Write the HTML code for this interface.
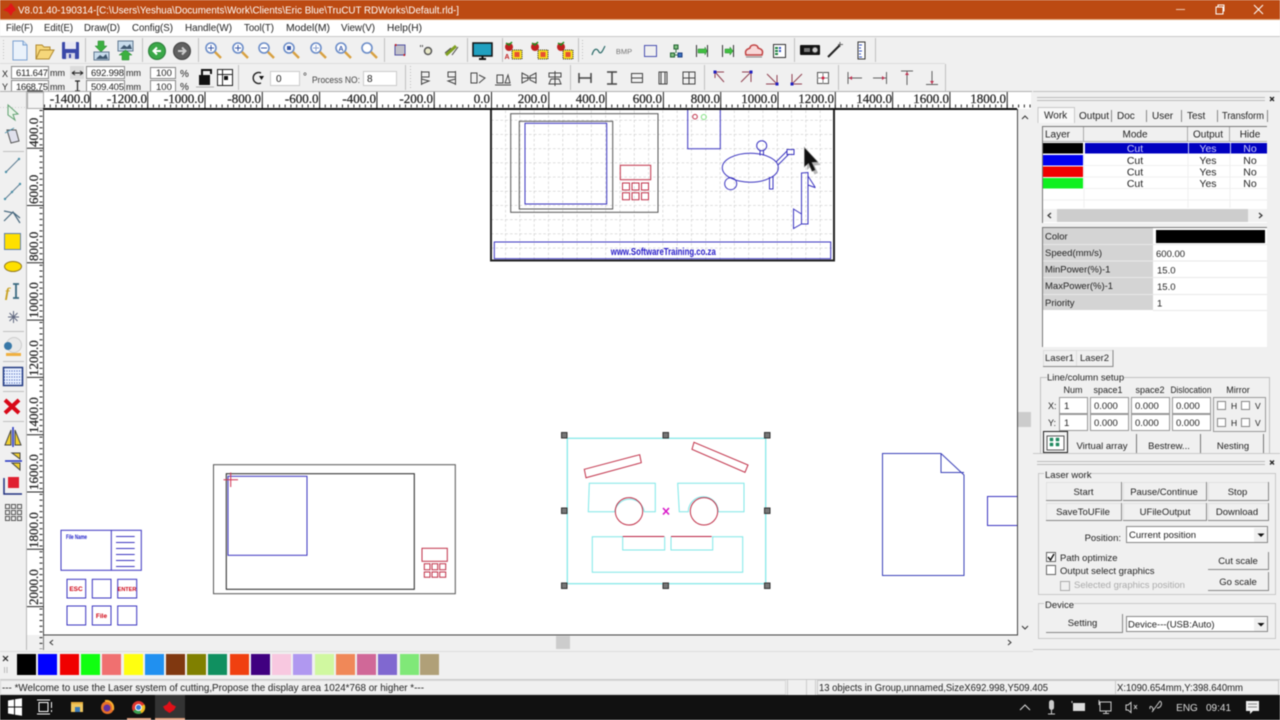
<!DOCTYPE html>
<html><head><meta charset="utf-8"><title>RDWorks</title>
<style>
html,body{margin:0;padding:0;background:#f0f0f0;overflow:hidden}
svg{display:block;position:absolute;left:0;top:0;filter:blur(.4px)}
text{font-family:"Liberation Sans",sans-serif;font-size:10px;fill:#222}
.r{font-family:"Liberation Serif",serif;font-size:13px;fill:#222;stroke:#222;stroke-width:.25}
.m{text-anchor:middle}.e{text-anchor:end}
.b{fill:#f0f0f0;stroke:#a8a8a8}
.bl{fill:none;stroke:#3a34c0}
.rd{fill:none;stroke:#c03048}
.cy{fill:none;stroke:#7fe8e8}
.gy{fill:none;stroke:#555}
.s{stroke:#c0c0c0}
.f{fill:#fff;stroke:#888}
.h{fill:#777;stroke:#333}
.mag{fill:#fff;stroke:#6a8cc8;stroke-width:1.6}
.hd{stroke:#d8a040;stroke-width:2.4}
.ic{fill:none;stroke:#444;stroke-width:1}
</style></head><body>
<svg width="1280" height="720" viewBox="0 0 1280 720" xmlns="http://www.w3.org/2000/svg">
<defs>
<pattern id="grid" x="491" y="120" width="14.3" height="14.2" patternUnits="userSpaceOnUse">
<path d="M0 0V14.2M0 0H14.3" stroke="#bdbdbd" stroke-width="1" stroke-dasharray="2.6 2.1" fill="none"/>
</pattern>
</defs>
<rect width="1280" height="720" fill="#f0f0f0"/>

<!-- title bar -->
<rect width="1280" height="19" fill="#bc4a12"/>
<rect y="19" width="1280" height="1" fill="#e0a070"/>
<path d="M3 10 L8 7 L11 3 L14 7 L16 10 L13 12 L11 16 L8 12Z" fill="#e01818"/>
<text x="18" y="13.5" fill="#fff" style="fill:#fff;font-size:10.5px" textLength="441" lengthAdjust="spacingAndGlyphs">V8.01.40-190314-[C:\Users\Yeshua\Documents\Work\Clients\Eric Blue\TruCUT RDWorks\Default.rld-]</text>
<path d="M1176 9.5H1185" stroke="#f0c8b0" stroke-width="1"/>
<rect x="1216" y="7" width="7" height="7" fill="none" stroke="#fff"/><path d="M1218 7V5H1224V11H1223" fill="none" stroke="#fff"/>
<path d="M1254 5L1263 14M1263 5L1254 14" stroke="#fff" stroke-width="1"/>

<!-- menu -->
<rect y="20" width="1280" height="17" fill="#fff"/>
<rect y="36" width="1280" height="1" fill="#c8c8c8"/>
<g>
<text x="6" y="31" style="font-size:10.5px" textLength="27" lengthAdjust="spacingAndGlyphs">File(F)</text>
<text x="44" y="31" style="font-size:10.5px" textLength="29" lengthAdjust="spacingAndGlyphs">Edit(E)</text>
<text x="84" y="31" style="font-size:10.5px" textLength="36" lengthAdjust="spacingAndGlyphs">Draw(D)</text>
<text x="132" y="31" style="font-size:10.5px" textLength="41" lengthAdjust="spacingAndGlyphs">Config(S)</text>
<text x="185" y="31" style="font-size:10.5px" textLength="47" lengthAdjust="spacingAndGlyphs">Handle(W)</text>
<text x="244" y="31" style="font-size:10.5px" textLength="30" lengthAdjust="spacingAndGlyphs">Tool(T)</text>
<text x="286" y="31" style="font-size:10.5px" textLength="44" lengthAdjust="spacingAndGlyphs">Model(M)</text>
<text x="341" y="31" style="font-size:10.5px" textLength="34" lengthAdjust="spacingAndGlyphs">View(V)</text>
<text x="387" y="31" style="font-size:10.5px" textLength="35" lengthAdjust="spacingAndGlyphs">Help(H)</text>
</g>

<!-- toolbar separators -->
<path d="M85.5 38V62M142.5 38V62M198.5 38V62M384.5 38V62M467.5 38V62M502.5 38V62M578.5 38V62M794.5 38V62M875.5 38V62M238.5 65V90M405.5 65V90M570.5 65V90M704.5 65V90M838.5 65V90M945.5 64V91" class="s"/>
<path d="M0 63.5H945" stroke="#dcdcdc"/>
<path d="M3.5 40V60M582.5 40V60M410.5 66V88" stroke="#bbb" stroke-dasharray="1 2"/>

<!-- toolbar 1 icons -->
<path d="M13 41H23L27 45V60H13Z" fill="#eaf2fb" stroke="#7aa0d0"/><path d="M23 41V45H27" fill="#cfe0f4" stroke="#7aa0d0"/>
<path d="M36 45H42L44 47H50V50H54L49 59H36Z" fill="#f6d77a" stroke="#b08a30"/><path d="M36 59L40 50H54" fill="none" stroke="#b08a30"/>
<rect x="62" y="42" width="17" height="17" rx="1" fill="#3a48a8"/><rect x="65" y="42" width="11" height="7" fill="#e8e8f4"/><rect x="66" y="53" width="9" height="6" fill="#d8d8e8"/><rect x="69" y="54" width="2" height="4" fill="#3a48a8"/>
<path d="M98 41H104V46H107L101 52L95 46H98Z" fill="#3cb040" stroke="#208028" stroke-width=".5"/><rect x="94" y="52" width="15" height="8" fill="#c8dcec" stroke="#607890"/><path d="M96 59L100 55L103 57L106 54L108 59Z" fill="#405870"/>
<rect x="118" y="41" width="15" height="10" fill="#c8dcec" stroke="#607890"/><path d="M120 49L124 45L127 47L130 44L132 49Z" fill="#405870"/><path d="M122 60V55H119L125.500 50L132 55H129V60Z" fill="#3cb040" stroke="#208028" stroke-width=".5"/>
<circle cx="157" cy="51" r="8.500" fill="#3aa848" stroke="#2a7a38"/><path d="M161 51H154M157 47.500L153.500 51L157 54.500" stroke="#fff" stroke-width="2" fill="none"/>
<circle cx="182" cy="51" r="8.500" fill="#606060" stroke="#404040"/><path d="M178 51H185M182 47.500L185.500 51L182 54.500" stroke="#ccc" stroke-width="2" fill="none"/>
<g><circle cx="211" cy="48" r="5" class="mag"/><path d="M215 52L221 58" class="hd"/><path d="M208 48H214M211 45V51" stroke="#3858a8"/></g>
<g><circle cx="238" cy="48" r="5" class="mag"/><path d="M242 52L248 58" class="hd"/><path d="M235 48H241M238 45V51" stroke="#3858a8"/></g>
<g><circle cx="264" cy="48" r="5" class="mag"/><path d="M268 52L274 58" class="hd"/><path d="M261 48H267" stroke="#3858a8"/></g>
<g><circle cx="289" cy="48" r="5" class="mag"/><path d="M293 52L299 58" class="hd"/><rect x="287" y="46" width="4" height="4" fill="#3858a8"/></g>
<g><circle cx="316" cy="48" r="5" class="mag"/><path d="M320 52L326 58" class="hd"/><path d="M313 48H319M316 45V51" stroke="#88a0d0"/></g>
<g><circle cx="341" cy="48" r="5" class="mag"/><path d="M345 52L351 58" class="hd"/><text x="341" y="51" class="m" style="font-size:7px;fill:#3858a8;font-weight:bold">A</text></g>
<g><circle cx="367" cy="48" r="5" class="mag"/><path d="M371 52L377 58" class="hd"/></g>
<rect x="395" y="45" width="10" height="10" fill="#c0c0c8" stroke="#5050a0"/><path d="M395 45h1.500M405 55h-1.500" stroke="#d02020" stroke-width="2"/>
<circle cx="428" cy="51" r="3.500" fill="#e8e8c8" stroke="#555" stroke-width="1.500"/><path d="M420 46h4" stroke="#555" stroke-dasharray="1 1" stroke-width="2"/>
<path d="M446 55L456 46" stroke="#80a020" stroke-width="3"/><path d="M445 53L451 48M452 55L458 47" stroke="#444"/>
<rect x="473" y="43" width="19" height="13" fill="#20a0c0" stroke="#111" stroke-width="1.500"/><path d="M479 59H486M482.500 56V59" stroke="#111" stroke-width="2"/>
<g><circle cx="509" cy="47" r="4" fill="#c02020"/><path d="M506 43l3 2 3-3" stroke="#209020" fill="none" stroke-width="1.500"/><rect x="512" y="50" width="10" height="9" fill="#f8e020" stroke="#222" stroke-dasharray="1 1"/><rect x="514.500" y="52" width="5" height="5" fill="#e85030"/><text x="507" y="59" class="m" style="font-size:7px;fill:#c02020;font-weight:bold">A</text></g>
<g><circle cx="535" cy="47" r="4" fill="#c02020"/><path d="M532 43l3 2 3-3" stroke="#209020" fill="none" stroke-width="1.500"/><rect x="538" y="50" width="10" height="9" fill="#f8e020" stroke="#222" stroke-dasharray="1 1"/><rect x="540.500" y="52" width="5" height="5" fill="#e85030"/></g>
<g><circle cx="561" cy="47" r="4" fill="#c02020"/><path d="M558 43l3 2 3-3" stroke="#209020" fill="none" stroke-width="1.500"/><rect x="563" y="50" width="10" height="9" fill="#f8e020" stroke="#222" stroke-dasharray="1 1"/><rect x="565.500" y="52" width="5" height="5" fill="#e85030"/></g>
<path d="M592 55C594 48 597 48 599 52C601 55 603 50 605 46" fill="none" stroke="#2a6a68" stroke-width="1.200"/>
<text x="624" y="54" class="m" style="font-size:7.500px;fill:#777">BMP</text>
<rect x="644.500" y="45.500" width="12" height="11" fill="none" stroke="#4a50b0"/>
<path d="M676 48V53M672 55H680" stroke="#3a7a48"/><rect x="674" y="45" width="4" height="4" fill="#80c080" stroke="#206030"/><rect x="670.500" y="53" width="4" height="4" fill="#80c080" stroke="#206030"/><rect x="678" y="53" width="4" height="4" fill="#3870c0" stroke="#204080"/>
<path d="M696.500 45V57M707.500 45V57" stroke="#333"/><path d="M698 49H705V47L707 51L705 55V53H698Z" fill="#40c040" stroke="#208028" stroke-width=".5"/>
<path d="M722.500 45V57M733.500 45V57" stroke="#333"/><path d="M725 49H730V47L733 51L730 55V53H725Z" fill="#40c040" stroke="#208028" stroke-width=".5"/>
<path d="M746 55C744 49 749 49 750 48C750 44 758 44 758 48C760 49 764 49 762 55Z" fill="#f8d8d8" stroke="#c04040" stroke-width="1.500"/><path d="M746 57H762" stroke="#888"/>
<rect x="773.500" y="44.500" width="12" height="13" fill="#fff" stroke="#333"/><path d="M775 48h3M775 51h3M775 54h3" stroke="#208040" stroke-width="2"/><path d="M779 48h2M779 51h2" stroke="#3050c0" stroke-width="2"/>
<rect x="800" y="45" width="20" height="10" rx="1" fill="#111"/><circle cx="815" cy="50" r="3" fill="#ccc" stroke="#333"/><rect x="804" y="48" width="6" height="4" fill="#777"/>
<path d="M828 57L840 45" stroke="#222" stroke-width="2"/><path d="M840 42V47M838 44.500H843" stroke="#666"/>
<rect x="858" y="42" width="7" height="17" fill="#fff" stroke="#333"/><path d="M859 45h3M859 48h2M859 51h3M859 54h2M859 57h3" stroke="#3050c0"/>

<!-- toolbar 2 -->
<text x="2" y="77" style="font-size:9px">X</text><text x="2" y="90" style="font-size:9px">Y</text>
<rect x="11.500" y="66.500" width="37" height="12" class="f" stroke="#888"/><text x="16" y="76" style="font-size:9.500px" textLength="32">611.647</text>
<rect x="11.500" y="80.500" width="37" height="11" class="f"/><text x="16" y="90" style="font-size:9.500px" textLength="32">1668.75</text>
<text x="50" y="76" style="font-size:9px">mm</text><text x="50" y="90" style="font-size:9px">mm</text>
<rect x="70" y="66" width="14" height="13" fill="#dcdcdc"/>
<path d="M72 73H83M72 73l3-2M72 73l3 2M83 73l-3-2M83 73l-3 2" stroke="#222" fill="none"/>
<path d="M77.500 81V91M75 81H80M75 91H80" stroke="#222" fill="none" stroke-width="1.200"/>
<rect x="86.500" y="66.500" width="38" height="12" class="f"/><text x="91" y="76" style="font-size:9.500px" textLength="33">692.998</text>
<rect x="86.500" y="80.500" width="38" height="11" class="f"/><text x="91" y="90" style="font-size:9.500px" textLength="33">509.405</text>
<text x="126" y="76" style="font-size:9px">mm</text><text x="126" y="90" style="font-size:9px">mm</text>
<rect x="150.500" y="67.500" width="25" height="11" class="f"/><text x="156" y="76" style="font-size:9.500px">100</text>
<rect x="150.500" y="80.500" width="25" height="11" class="f"/><text x="156" y="90" style="font-size:9.500px">100</text>
<text x="180" y="77" style="font-size:10px">%</text><text x="180" y="90" style="font-size:10px">%</text>
<rect x="199" y="75" width="11" height="10" fill="#111"/><path d="M202 75V70H211V74" fill="none" stroke="#111" stroke-width="2"/><path d="M196 87H214" stroke="#aaa"/>
<rect x="217.500" y="69.500" width="15" height="16" fill="#fff" stroke="#222"/><path d="M217.500 74.500H232.500M222.500 69.500V85.500" stroke="#222"/><rect x="224" y="76" width="4" height="4" fill="#111"/>
<path d="M261 73A5.500 5.500 0 1 0 261 83" fill="none" stroke="#222" stroke-width="1.400"/><path d="M259 76H264L261.500 80Z" fill="#111"/>
<rect x="270.500" y="71.500" width="29" height="14" class="f" style="stroke:#ccc"/><text x="276" y="82">0</text>
<text x="303" y="80" style="font-size:10px">°</text>
<text x="312" y="83" style="font-size:9.500px;fill:#444" textLength="48" lengthAdjust="spacingAndGlyphs">Process NO:</text>
<rect x="363.500" y="71.500" width="33" height="14" class="f" style="stroke:#ccc"/><text x="367" y="82">8</text>

<g class="ic">
<path d="M421.500 71V85M421.500 72H429V77H421.500M421.500 79L429 81L421.500 84" />
<path d="M455.500 71V85M455.500 72H448V77H455.500M455.500 79L448 81L455.500 84"/>
<path d="M471 73H477V83H471ZM479 75L485 78L479 83"/>
<path d="M497 83V75H503V83ZM505 83L508 75L510 83ZM495 85H511"/>
<path d="M522 73L528 76V80L522 83ZM536 73L530 76V80L536 83ZM522 78H536"/>
<path d="M555 71V86M549 73H561V77H549ZM551 79H559L561 84H549Z"/>
<path d="M579 73V83M591 73V83M579 78H591" stroke-width="1.500"/>
<path d="M607 72H617M607 84H617M612 72V84" stroke-width="1.500"/>
<path d="M631 73.500H643M631 82.500H643M631.500 74V82M642.500 74V82M631 78H643"/>
<path d="M659 72H667V84H659ZM661 72V84M665 72V84"/>
<path d="M683 72H695V84H683ZM689 72V84M683 78H695"/>
</g>
<path d="M715 72V78M715 72H724M716 73L724 82" fill="none" stroke="#904050"/><rect x="713.500" y="70.500" width="3" height="3" fill="#2020c0"/>
<path d="M742 72H751V82M750 73L741 82" fill="none" stroke="#904050"/><rect x="749.500" y="70.500" width="3" height="3" fill="#2020c0"/>
<path d="M766 84H777V75M776 83L767 74" fill="none" stroke="#904050"/><rect x="775.500" y="82.500" width="3" height="3" fill="#2020c0"/>
<path d="M792 74V84H802M793 83L802 74" fill="none" stroke="#904050"/><rect x="790.500" y="82.500" width="3" height="3" fill="#2020c0"/>
<rect x="817.500" y="72.500" width="11" height="11" fill="#fff" stroke="#555"/><path d="M823 72V84M817 78H829" stroke="#888"/><circle cx="823" cy="78" r="1.500" fill="#d02040"/>
<path d="M848 72V84M848 78H862" stroke="#606060"/><path d="M849 78l3-2v4z" fill="#c03050"/>
<path d="M886.500 72V84M873 78H886" stroke="#606060"/><path d="M885 78l-3-2v4z" fill="#c03050"/>
<path d="M901 71H913M907 71V85" stroke="#606060"/><path d="M907 72l-2 3h4z" fill="#c03050"/>
<path d="M926 84.500H938M932 71V84" stroke="#606060"/><path d="M932 84l-2-3h4z" fill="#c03050"/>

<!-- rulers -->
<rect x="27" y="92" width="1004" height="17" fill="#fff"/>
<path d="M0 91.500H1032" stroke="#b0b0b0"/>
<rect x="27" y="109" width="16" height="526" fill="#fff"/>
<line x1="32.600" y1="100" x2="1031" y2="100" stroke="#222" stroke-width="16" stroke-dasharray="1 56.300"/>
<line x1="44" y1="106" x2="1031" y2="106" stroke="#222" stroke-width="3" stroke-dasharray="1 4.730" stroke-dashoffset="0"/>
<rect x="27.500" y="92.500" width="16" height="16" fill="#f4f4f4" stroke="#aaa"/>
<g class="r">
<text class="r e" x="90" y="103">-1400.0</text>
<text class="r e" x="147" y="103">-1200.0</text>
<text class="r e" x="204" y="103">-1000.0</text>
<text class="r e" x="261" y="103">-800.0</text>
<text class="r e" x="318.500" y="103">-600.0</text>
<text class="r e" x="376" y="103">-400.0</text>
<text class="r e" x="433" y="103">-200.0</text>
<text class="r e" x="490" y="103">0.0</text>
<text class="r e" x="547" y="103">200.0</text>
<text class="r e" x="605" y="103">400.0</text>
<text class="r e" x="662" y="103">600.0</text>
<text class="r e" x="720" y="103">800.0</text>
<text class="r e" x="777" y="103">1000.0</text>
<text class="r e" x="834" y="103">1200.0</text>
<text class="r e" x="892" y="103">1400.0</text>
<text class="r e" x="949" y="103">1600.0</text>
<text class="r e" x="1006" y="103">1800.0</text>
</g>
<line x1="35" y1="90.400" x2="35" y2="635" stroke="#222" stroke-width="16" stroke-dasharray="1 56.300"/>
<line x1="41" y1="110" x2="41" y2="649" stroke="#222" stroke-width="3" stroke-dasharray="1 4.730"/>
<path d="M43.500 635V650" stroke="#777"/>
<g>
<text class="r" transform="translate(38 147) rotate(-90)">400.0</text>
<text class="r" transform="translate(38 204) rotate(-90)">600.0</text>
<text class="r" transform="translate(38 261) rotate(-90)">800.0</text>
<text class="r" transform="translate(38 318) rotate(-90)">1000.0</text>
<text class="r" transform="translate(38 376) rotate(-90)">1200.0</text>
<text class="r" transform="translate(38 433) rotate(-90)">1400.0</text>
<text class="r" transform="translate(38 490) rotate(-90)">1600.0</text>
<text class="r" transform="translate(38 548) rotate(-90)">1800.0</text>
<text class="r" transform="translate(38 605) rotate(-90)">2000.0</text>
</g>

<!-- left toolbar -->
<path d="M26.500 92V650" stroke="#b8b8b8"/>
<path d="M0 107.500H26" stroke="#ccc" stroke-dasharray="1 2"/>
<path d="M8 105L18 114L13 114.500L15 120L8 115Z" fill="#e8f4e8" stroke="#60a070"/>
<path d="M7 130L16 130L19 141L11 143Z" fill="#e0e0ec" stroke="#555"/><path d="M5 133L14 128" stroke="#4a90a8"/>
<path d="M3 151.500H24M3 331.500H24M3 361.500H24M3 391.500H24M3 421.500H24" class="s"/>
<path d="M6 172L19 159" stroke="#5a7a90"/><circle cx="6" cy="172" r="1.200" fill="#4a90a8"/><circle cx="19" cy="159" r="1.200" fill="#4a90a8"/>
<path d="M5 199L20 184" stroke="#5a7a90"/><circle cx="5" cy="199" r="1.200" fill="#4a90a8"/><circle cx="12" cy="192" r="1.200" fill="#4a90a8"/><circle cx="20" cy="184" r="1.200" fill="#4a90a8"/>
<path d="M4 221L13 212L20 223M4 211L14 213L20 218" fill="none" stroke="#4a6a80" stroke-width="1.200"/>
<rect x="4.500" y="233.500" width="16" height="16" fill="#ffe000" stroke="#6080b0"/>
<ellipse cx="13" cy="266.500" rx="8.500" ry="5" fill="#ffe000" stroke="#907820"/>
<text x="5" y="297" style="font-size:14px;font-weight:bold;fill:#c8a020;font-family:'Liberation Serif',serif;font-style:italic">f</text><path d="M13 284H19M16 284V298M13 298H19" stroke="#3a6a80" stroke-width="1.800" fill="none"/>
<path d="M13.500 311V323M8 317H19M9.500 313L17.500 321M17.500 313L9.500 321" stroke="#606880"/>
<circle cx="14" cy="345" r="7.500" fill="#e8e8e8" stroke="#ccc"/><circle cx="8" cy="346" r="4" fill="#3878a8"/><path d="M6 353H21V356H6Z" fill="#f0b040"/>
<rect x="3.500" y="367.500" width="19" height="18" fill="#e8f0ff" stroke="#203880" stroke-width="1.500"/><path d="M4 371H22M4 374H22M4 377H22M4 380H22M4 383H22" stroke="#3050b0" stroke-dasharray="1 1.500"/>
<path d="M5 400L19 413M19 400L5 413" stroke="#d80818" stroke-width="4"/>
<path d="M11 430V445H5ZM15 430V445H21Z" fill="#f0d030" stroke="#444"/><path d="M13 427V447" stroke="#2030c0" stroke-width="1.500"/>
<path d="M20 453H12L20 459ZM20 463H12L20 470Z" fill="#f0d030" stroke="#444"/><path d="M5 461H22" stroke="#2030c0" stroke-width="1.500"/>
<rect x="8" y="477" width="11" height="11" fill="#e02030"/><path d="M4 478V494H22" fill="none" stroke="#203080" stroke-width="1.500"/>
<g fill="none" stroke="#555"><rect x="5.500" y="504.500" width="4" height="4"/><rect x="11.500" y="504.500" width="4" height="4"/><rect x="17.500" y="504.500" width="4" height="4"/><rect x="5.500" y="510.500" width="4" height="4"/><rect x="11.500" y="510.500" width="4" height="4"/><rect x="17.500" y="510.500" width="4" height="4"/><rect x="5.500" y="516.500" width="4" height="4"/><rect x="11.500" y="516.500" width="4" height="4"/><rect x="17.500" y="516.500" width="4" height="4"/></g>

<!-- canvas -->
<rect x="44" y="110" width="973" height="524" fill="#fff"/>
<path d="M43 109H1017" stroke="#111" stroke-width="2"/>
<path d="M43.500 109V635H1017.500V109" fill="none" stroke="#444"/>

<!-- top file -->
<rect x="491" y="110" width="343" height="150" fill="url(#grid)"/>
<path d="M491 110V260.500H834V110" fill="none" stroke="#222" stroke-width="2"/>
<rect x="510.700" y="113.700" width="147.300" height="98.600" class="gy"/>
<rect x="519.300" y="121.300" width="93.400" height="87.700" class="gy"/>
<rect x="525" y="123.300" width="81.700" height="80.700" class="bl"/>
<rect x="620.300" y="165.300" width="30.400" height="14.400" class="rd"/>
<path d="M622.500 183h7v7h-7zM632 183h7v7h-7zM641.500 183h7v7h-7zM622.500 192.800h7v7h-7zM632 192.800h7v7h-7zM641.500 192.800h7v7h-7z" class="rd"/>
<path d="M687.700 110V148.700H720.300V110" class="bl"/>
<circle cx="695" cy="116.700" r="2.300" class="rd"/><circle cx="703.800" cy="117" r="2.500" fill="none" stroke="#80e080"/>
<ellipse cx="750.300" cy="167.700" rx="28" ry="14.500" class="bl"/>
<circle cx="761.700" cy="145.700" r="5" class="bl"/><path d="M760 150.500V155.500M763.500 150.500V155.500" class="bl"/>
<circle cx="730.700" cy="183.700" r="6" class="bl"/>
<path d="M776 162L787 151M778 165L789 154" class="bl"/><rect x="787" y="149.500" width="7" height="5" class="bl"/>
<path d="M769.500 177V189H773V176" class="bl"/>
<path d="M801.500 173L808 172.500V224H801.500L793.500 228.500V209L801.500 214Z M801.500 173V224M808 176L815 187L815 187.500L808 185" class="bl"/>
<path d="M807 150V170L811 166.500L814.500 174.500L818 173L814.500 165.500L820.500 165Z" fill="#999" opacity=".7"/>
<path d="M804.300 147.300V167L808.500 163.500L812 171.500L815.500 170L812 162.500L818 162Z" fill="#111" stroke="#999" stroke-width=".6"/>
<rect x="494.300" y="242" width="336.400" height="16.700" class="bl"/>
<text x="663.300" y="255" class="m" style="font-size:10px;font-weight:bold;fill:#2418c8" textLength="105" lengthAdjust="spacingAndGlyphs">www.SoftwareTraining.co.za</text>

<!-- selected group -->
<rect x="567.300" y="438.300" width="198.400" height="145.400" class="cy" stroke-width="1.200"/>
<path d="M584.300 469.300L639.700 454.700L641.300 462.700L586 477.700Z M694 442.300L748 465L745 472.300L692 449.300Z" class="rd"/>
<path d="M589.300 483.300H655.300V511.700H644.300A15 15 0 0 0 614.700 511.700H588.300Z" class="cy"/>
<path d="M677.700 483.300H744V511.700H718.300A15 15 0 0 0 688.300 511.700H679.300Z" class="cy"/>
<circle cx="629" cy="511.300" r="13.700" class="rd"/><circle cx="704" cy="511.300" r="13.700" class="rd"/>
<path d="M663 508L669 514.500M669 508L663 514.500" stroke="#d818c8" stroke-width="1.600"/>
<path d="M622.700 536.700H592.300V572.300H742.700V536.700H712.700V550H671V536.700M664.700 536.700V550H622.700V536.700" class="cy"/>
<path d="M622.700 536.500H664.300M671 536.500H711.700" stroke="#b82040"/>
<g class="h">
<rect x="561.500" y="432.500" width="5.500" height="5.500"/><rect x="663" y="432.500" width="5.500" height="5.500"/><rect x="764.500" y="432.500" width="5.500" height="5.500"/>
<rect x="561.500" y="508" width="5.500" height="5.500"/><rect x="764.500" y="508" width="5.500" height="5.500"/>
<rect x="561.500" y="583" width="5.500" height="5.500"/><rect x="663" y="583" width="5.500" height="5.500"/><rect x="764.500" y="583" width="5.500" height="5.500"/>
</g>

<!-- right side file -->
<path d="M882.500 453.500H941L964 475V575.500H882.500Z M941 453.500V472.500H964" class="bl" style="stroke:#3a40b8"/>
<path d="M1017 496.500H987.500V525.500H1017" class="bl"/>

<!-- left machine -->
<rect x="213.500" y="464.700" width="241.800" height="129" class="gy"/>
<rect x="226.300" y="473.700" width="188" height="115.600" fill="none" stroke="#222"/>
<rect x="228" y="476.300" width="79" height="79" class="bl"/>
<path d="M223.500 479.700H238M230.700 472.500V487" stroke="#d03050"/>
<rect x="422" y="548.300" width="25.300" height="13" class="rd"/>
<path d="M424.300 563.700h5.700v6h-5.700zM432 563.700h5.700v6h-5.700zM439.700 563.700h6v6h-6zM424.300 572h5.700v5.300h-5.700zM432 572h5.700v5.300h-5.700zM439.700 572h6v5.300h-6z" class="rd"/>
<!-- card -->
<rect x="61" y="530.300" width="80.300" height="40" class="bl"/>
<path d="M111.300 530.300V570.300M116 536.500H134.700M116 542.500H134.700M116 548.500H134.700M116 554.500H134.700M116 560.500H134.700M116 566.500H134.700" class="bl"/>
<text x="66" y="539" style="font-size:6px;font-weight:bold;fill:#1818c8" textLength="21" lengthAdjust="spacingAndGlyphs">File Name</text>
<g class="bl">
<rect x="67" y="579.300" width="18.700" height="18.700"/><rect x="92.300" y="579.300" width="18.700" height="18.700"/><rect x="117.700" y="579.300" width="19" height="18.700"/>
<rect x="67" y="606" width="18.700" height="19"/><rect x="92.300" y="606" width="18.700" height="19"/><rect x="117.700" y="606" width="19" height="19"/>
</g>
<text x="76" y="591" class="m" style="font-size:6.500px;font-weight:bold;fill:#d00010">ESC</text>
<text x="127" y="591" class="m" style="font-size:5.500px;font-weight:bold;fill:#d00010">ENTER</text>
<text x="101.500" y="618" class="m" style="font-size:6.500px;font-weight:bold;fill:#d00010">File</text>

<!-- scrollbars -->
<path d="M1022 119L1025 116L1028 119" fill="none" stroke="#333"/>
<path d="M1022 626L1025 629L1028 626" fill="none" stroke="#333"/>
<rect x="1018" y="412" width="13" height="15" fill="#ccc"/>
<path d="M53 640L50 642.500L53 645" fill="none" stroke="#333"/>
<path d="M1008 640L1011 642.500L1008 645" fill="none" stroke="#333"/>
<rect x="556" y="636" width="14" height="13" fill="#ccc"/>
<path d="M0 651.500H1033" stroke="#ddd"/>

<!-- palette -->
<path d="M3 656L8 661M8 656L3 661" stroke="#222" stroke-width="1.200"/>
<path d="M4.500 667V673M7 667V673" stroke="#bbb"/>
<g>
<rect x="17" y="654" width="19" height="21" fill="#000"/>
<rect x="38" y="654" width="19" height="21" fill="#0000ff"/>
<rect x="60" y="654" width="19" height="21" fill="#f00000"/>
<rect x="81" y="654" width="19" height="21" fill="#10ff10"/>
<rect x="102" y="654" width="19" height="21" fill="#f07070"/>
<rect x="124" y="654" width="19" height="21" fill="#ffff10"/>
<rect x="145" y="654" width="19" height="21" fill="#2090f0"/>
<rect x="166" y="654" width="19" height="21" fill="#803810"/>
<rect x="187" y="654" width="19" height="21" fill="#808000"/>
<rect x="208" y="654" width="19" height="21" fill="#109060"/>
<rect x="230" y="654" width="19" height="21" fill="#f04010"/>
<rect x="251" y="654" width="19" height="21" fill="#400080"/>
<rect x="272" y="654" width="19" height="21" fill="#f8c8e0"/>
<rect x="293" y="654" width="19" height="21" fill="#b098f0"/>
<rect x="315" y="654" width="19" height="21" fill="#d0f8a0"/>
<rect x="336" y="654" width="19" height="21" fill="#f08858"/>
<rect x="357" y="654" width="19" height="21" fill="#d06898"/>
<rect x="378" y="654" width="19" height="21" fill="#8068d0"/>
<rect x="400" y="654" width="19" height="21" fill="#80e878"/>
<rect x="420" y="654" width="19" height="21" fill="#b0a078"/>
</g>

<!-- status bar -->
<path d="M0 679.500H1280" stroke="#c8c8c8"/>
<rect x="0.500" y="680.500" width="785" height="14" fill="#f0f0f0" stroke="#d8d8d8"/>
<text x="2" y="691" style="font-size:10.500px" textLength="422" lengthAdjust="spacingAndGlyphs">--- *Welcome to use the Laser system of cutting,Propose the display area 1024*768 or higher *---</text>
<path d="M787.500 680V695M806.500 680V695M815.500 680V695" stroke="#ccc"/>
<rect x="817.500" y="680.500" width="316" height="14" fill="#f0f0f0" stroke="#c8c8c8"/>
<text x="819" y="691" style="font-size:10.500px" textLength="229" lengthAdjust="spacingAndGlyphs">13 objects in Group,unnamed,SizeX692.998,Y509.405</text>
<rect x="1115.500" y="680.500" width="163" height="14" fill="#f0f0f0" stroke="#c8c8c8"/>
<text x="1117" y="691" style="font-size:10.500px" textLength="126" lengthAdjust="spacingAndGlyphs">X:1090.654mm,Y:398.640mm</text>

<!-- right panel -->
<path d="M1033 91.500H1280" stroke="#c0c0c0"/>
<path d="M1037 97.500H1265M1037 100.500H1265" stroke="#bbb"/>
<path d="M1270 97L1274 101M1274 97L1270 101" stroke="#222" stroke-width="1.300"/>
<!-- tabs -->
<path d="M1038 123V107.500H1074.500V123" fill="#f8f8f8" stroke="#c8c8c8"/>
<text x="1044" y="118.500" style="font-size:10px">Work</text>
<text x="1079" y="119" style="font-size:10px">Output</text>
<text x="1117" y="119" style="font-size:10px">Doc</text>
<text x="1152" y="119" style="font-size:10px">User</text>
<text x="1187" y="119" style="font-size:10px">Test</text>
<text x="1222" y="119" style="font-size:10px" textLength="42" lengthAdjust="spacingAndGlyphs">Transform</text>
<path d="M1111.500 110V122M1146.500 110V122M1181.500 110V122M1217.500 110V122M1267.500 110V122" stroke="#888"/>
<!-- layer table -->
<rect x="1042" y="126" width="225" height="97" fill="#fff"/>
<path d="M1042 126.500H1267M1042.500 126V223" stroke="#777"/>
<rect x="1043" y="127" width="224" height="14" fill="#f0f0f0"/>
<path d="M1043 141.500H1267M1083.500 127V141M1187.500 127V141M1229.500 127V141" stroke="#aaa"/>
<text x="1057.500" y="137.500" class="m" style="font-size:10px">Layer</text>
<text x="1135" y="137.500" class="m" style="font-size:10px">Mode</text>
<text x="1208" y="137.500" class="m" style="font-size:10px">Output</text>
<text x="1250" y="137.500" class="m" style="font-size:10px">Hide</text>
<rect x="1043" y="143" width="40" height="10.500" fill="#000"/><rect x="1043" y="155" width="40" height="10.500" fill="#0000f0"/><rect x="1043" y="166.500" width="40" height="10.500" fill="#f00000"/><rect x="1043" y="178" width="40" height="10.500" fill="#10f020"/>
<rect x="1085" y="143" width="182" height="10.500" fill="#0000c0"/>
<path d="M1188.500 143V154M1230.500 143V154" stroke="#c8d0f0"/>
<path d="M1084 165.500H1267M1084 177H1267M1084 188.500H1267M1043 200H1267M1084 154V208M1188 154V208M1230 154V208" stroke="#f0f0f0"/>
<text x="1135" y="152" class="m" style="fill:#cfd0f8;font-size:10.500px">Cut</text><text x="1208" y="152" class="m" style="fill:#cfd0f8;font-size:10.500px">Yes</text><text x="1250" y="152" class="m" style="fill:#cfd0f8;font-size:10.500px">No</text>
<text x="1135" y="164" class="m" style="font-size:10.500px">Cut</text><text x="1208" y="164" class="m" style="font-size:10.500px">Yes</text><text x="1250" y="164" class="m" style="font-size:10.500px">No</text>
<text x="1135" y="175.500" class="m" style="font-size:10.500px">Cut</text><text x="1208" y="175.500" class="m" style="font-size:10.500px">Yes</text><text x="1250" y="175.500" class="m" style="font-size:10.500px">No</text>
<text x="1135" y="187" class="m" style="font-size:10.500px">Cut</text><text x="1208" y="187" class="m" style="font-size:10.500px">Yes</text><text x="1250" y="187" class="m" style="font-size:10.500px">No</text>
<rect x="1043" y="209" width="224" height="13" fill="#f0f0f0"/><rect x="1057" y="209" width="191" height="13" fill="#cdcdcd"/>
<path d="M1051 213L1048 215.500L1051 218M1259 213L1262 215.500L1259 218" fill="none" stroke="#333" stroke-width="1.200"/>
<!-- property grid -->
<rect x="1042" y="227" width="225" height="120" fill="#fff"/>
<path d="M1042 227.500H1267M1042.500 227V347" stroke="#777"/>
<rect x="1043" y="228" width="110" height="82" fill="#d4d4d4"/>
<path d="M1043 244.500H1267M1043 261H1267M1043 277.500H1267M1043 294.500H1267M1153 310.500H1267" stroke="#e8e8e8"/>
<rect x="1156" y="230" width="109" height="13" fill="#000"/>
<text x="1045" y="239.500" style="font-size:9.500px">Color</text>
<text x="1045" y="256" style="font-size:9.500px">Speed(mm/s)</text>
<text x="1045" y="272.500" style="font-size:9.500px">MinPower(%)-1</text>
<text x="1045" y="289" style="font-size:9.500px">MaxPower(%)-1</text>
<text x="1045" y="306" style="font-size:9.500px">Priority</text>
<text x="1156" y="257" style="font-size:9.500px">600.00</text>
<text x="1157" y="273.500" style="font-size:9.500px">15.0</text>
<text x="1157" y="290" style="font-size:9.500px">15.0</text>
<text x="1157" y="306.500" style="font-size:9.500px">1</text>
<!-- laser tabs -->
<path d="M1043.500 366V350.500H1112.500M1076.500 350V366" fill="none" stroke="#ddd"/><path d="M1043 366.500H1113V350" fill="none" stroke="#888"/>
<text x="1045" y="361" style="font-size:9.500px">Laser1</text><text x="1080" y="361" style="font-size:9.500px">Laser2</text>
<!-- line column -->
<path d="M1047 377.500H1040.500V453M1124 377.500H1269.500V453" fill="none" stroke="#c0c0c0"/>
<text x="1047" y="380.500" style="font-size:9.500px">Line/column setup</text>
<text x="1073" y="393" class="m" style="font-size:9px">Num</text>
<text x="1108" y="393" class="m" style="font-size:9px">space1</text>
<text x="1150" y="393" class="m" style="font-size:9px">space2</text>
<text x="1191" y="393" class="m" style="font-size:9px" textLength="41" lengthAdjust="spacingAndGlyphs">Dislocation</text>
<text x="1238" y="393" class="m" style="font-size:9px">Mirror</text>
<text x="1048" y="409" style="font-size:9px">X:</text><text x="1048" y="426" style="font-size:9px">Y:</text>
<g class="f" style="stroke:#999">
<rect x="1059.500" y="397.500" width="28" height="16"/><rect x="1090.500" y="397.500" width="38" height="16"/><rect x="1131.500" y="397.500" width="38" height="16"/><rect x="1172.500" y="397.500" width="38" height="16"/>
<rect x="1059.500" y="414.500" width="28" height="16"/><rect x="1090.500" y="414.500" width="38" height="16"/><rect x="1131.500" y="414.500" width="38" height="16"/><rect x="1172.500" y="414.500" width="38" height="16"/>
</g>
<text x="1064" y="409" style="font-size:9.500px">1</text><text x="1094" y="409" style="font-size:9.500px">0.000</text><text x="1135" y="409" style="font-size:9.500px">0.000</text><text x="1176" y="409" style="font-size:9.500px">0.000</text>
<text x="1064" y="426" style="font-size:9.500px">1</text><text x="1094" y="426" style="font-size:9.500px">0.000</text><text x="1135" y="426" style="font-size:9.500px">0.000</text><text x="1176" y="426" style="font-size:9.500px">0.000</text>
<rect x="1213.500" y="397.500" width="52" height="34" fill="none" stroke="#999"/>
<g fill="#fff" stroke="#888"><rect x="1217.500" y="401.500" width="8" height="8"/><rect x="1241.500" y="401.500" width="8" height="8"/><rect x="1217.500" y="418.500" width="8" height="8"/><rect x="1241.500" y="418.500" width="8" height="8"/></g>
<text x="1231" y="409" style="font-size:8.500px">H</text><text x="1255" y="409" style="font-size:8.500px">V</text><text x="1231" y="426" style="font-size:8.500px">H</text><text x="1255" y="426" style="font-size:8.500px">V</text>
<rect x="1043.500" y="431.500" width="24" height="21" fill="#f4f4f4" stroke="#222"/><rect x="1047" y="436" width="17" height="14" fill="#fff" stroke="#555"/><path d="M1050 438h3v3h-3zM1056 438h3v3h-3zM1050 443h3v3h-3zM1056 443h3v3h-3z" fill="#208a60" stroke="#208a60" stroke-width=".5"/>
<path d="M1136.500 434V453M1200.500 434V453M1263.500 434V453" stroke="#777"/>
<text x="1102" y="449" class="m" style="font-size:9.500px">Virtual array</text>
<text x="1169" y="449" class="m" style="font-size:9.500px">Bestrew...</text>
<text x="1233" y="449" class="m" style="font-size:9.500px">Nesting</text>

<!-- panel 2 -->
<rect x="1033" y="453" width="247" height="198" fill="#f0f0f0"/>
<path d="M1033 453.500H1280M1033 649.500H1280" stroke="#c8c8c8"/>
<path d="M1037 461.500H1265M1037 464.500H1265" stroke="#bbb"/>
<path d="M1270 460.500L1274 464.500M1274 460.500L1270 464.500" stroke="#222" stroke-width="1.300"/>
<path d="M1044 473.500H1038.500V594.500H1275.500V473.500H1090" fill="none" stroke="#c8c8c8"/>
<text x="1045" y="478" style="font-size:9.500px">Laser work</text>

<g fill="none" stroke="#888">
<path d="M1046 500.500H1121.500V482"/><path d="M1123 500.500H1206.500V482"/><path d="M1208 500.500H1268.500V482"/>
<path d="M1046 520.500H1121.500V503"/><path d="M1123 520.500H1206.500V503"/><path d="M1208 520.500H1268.500V503"/>
<path d="M1208 569.500H1268.500V552"/><path d="M1208 590.500H1268.500V572"/>
<path d="M1046 632.500H1122.500V614"/>
</g>
<g stroke="#e0e0e0" fill="none">
<path d="M1046.500 500V482.500H1121"/><path d="M1123.500 500V482.500H1206"/><path d="M1208.500 500V482.500H1268"/>
<path d="M1046.500 520V503.500H1121"/><path d="M1123.500 520V503.500H1206"/><path d="M1208.500 520V503.500H1268"/>
</g>
<text x="1083.500" y="495" class="m" style="font-size:9.500px">Start</text>
<text x="1164" y="495" class="m" style="font-size:9.500px">Pause/Continue</text>
<text x="1237.500" y="495" class="m" style="font-size:9.500px">Stop</text>
<text x="1083" y="515" class="m" style="font-size:9.500px">SaveToUFile</text>
<text x="1165" y="515" class="m" style="font-size:9.500px">UFileOutput</text>
<text x="1237" y="515" class="m" style="font-size:9.500px">Download</text>
<text x="1121" y="541" class="e" style="font-size:9.500px">Position:</text>
<rect x="1126.500" y="526.500" width="141" height="16" fill="#fff" stroke="#888"/>
<text x="1129" y="538" style="font-size:9.500px">Current position</text>
<rect x="1254" y="528" width="13" height="14" fill="#f0f0f0"/><path d="M1257.500 533.500H1264.500L1261 537Z" fill="#111"/>
<rect x="1046.500" y="552.500" width="9" height="9" fill="#fff" stroke="#666"/><path d="M1048 557L1050.500 560L1054 554" fill="none" stroke="#111" stroke-width="1.400"/>
<text x="1060" y="561" style="font-size:9.500px">Path optimize</text>
<rect x="1046.500" y="565.500" width="9" height="9" fill="#fff" stroke="#666"/>
<text x="1060" y="574" style="font-size:9.500px">Output select graphics</text>
<rect x="1060.500" y="581.500" width="9" height="9" fill="#f0f0f0" stroke="#aaa"/>
<text x="1074" y="588" style="font-size:9.500px;fill:#aaa">Selected graphics position</text>
<text x="1238" y="564" class="m" style="font-size:9.500px">Cut scale</text>
<text x="1238" y="585" class="m" style="font-size:9.500px">Go scale</text>
<path d="M1044 603.500H1038.500V638.500H1275.500V603.500H1074" fill="none" stroke="#c8c8c8"/>
<text x="1045" y="608" style="font-size:9.500px">Device</text>
<text x="1082.500" y="626" class="m" style="font-size:9.500px">Setting</text>
<rect x="1126.500" y="616.500" width="141" height="15" fill="#fff" stroke="#888"/>
<text x="1128" y="627.500" style="font-size:9.500px">Device---(USB:Auto)</text>
<rect x="1254" y="618" width="13" height="13" fill="#f0f0f0"/><path d="M1257.500 623H1264.500L1261 626.500Z" fill="#111"/>

<!-- taskbar -->
<rect y="695" width="1280" height="25" fill="#111"/>
<path d="M8 700.500L14 699.500V706.500H8ZM15 699.300L22 698.300V706.500H15ZM8 707.500H14V714.500L8 713.500ZM15 707.500H22V715.700L15 714.700Z" fill="#fff"/>
<path d="M39 702.500H48V711.500H39Z M37 700H50M37 714H50" fill="none" stroke="#fff"/><path d="M51.500 702V708M51.500 710V712" stroke="#fff"/>
<path d="M71 702H83V712H71Z" fill="#f0c860"/><path d="M71 702H83V704H71Z" fill="#e8b040"/><rect x="75" y="707" width="5" height="5" fill="#3878b8"/>
<circle cx="107.500" cy="707.500" r="6.500" fill="#e87028"/><circle cx="107" cy="708" r="3.500" fill="#6030a0"/><path d="M105 701C110 700 114 704 113 710" stroke="#f8b030" fill="none" stroke-width="2"/>
<circle cx="138.500" cy="707.500" r="6.500" fill="#e03830"/><path d="M138.500 707.500L133 711A6.500 6.500 0 0 0 141.500 713.300Z" fill="#38a050"/><path d="M138.500 707.500L141.500 713.300A6.500 6.500 0 0 0 144.500 704.500Z" fill="#f0c020"/><circle cx="138.500" cy="707.500" r="3" fill="#3878d8" stroke="#fff"/>
<rect x="127" y="718" width="24" height="2" fill="#e0a080"/>
<rect x="155" y="695" width="30" height="25" fill="#333"/>
<rect x="155" y="718" width="30" height="2" fill="#e0a080"/>
<path d="M169.500 701L172 704.500L176 706.500L174 710L169.500 713L165 710L163 706.500L167 704.500Z" fill="#e01018"/>
<path d="M1020 710L1025 705L1030 710" fill="none" stroke="#ddd"/>
<rect x="1049" y="700" width="5" height="10" rx="2.500" fill="#ccc"/><path d="M1051.500 710V714M1048 714H1055" stroke="#ccc"/>
<rect x="1073" y="703" width="12" height="8" fill="#ddd"/><path d="M1072 701V703" stroke="#ccc"/>
<rect x="1100" y="702" width="11" height="9" fill="none" stroke="#ccc"/><path d="M1106 713V711M1103 713.500H1109M1099 700V705" stroke="#ccc"/>
<path d="M1126 705H1128L1131 702.500V712.500L1128 710H1126Z" fill="none" stroke="#ccc"/><path d="M1134 705L1137 709M1137 705L1134 709" stroke="#ccc"/>
<path d="M1152 712L1160 701M1150 709C1149 704 1154 707 1153 711M1157 708C1161 708 1163 703 1160 701" fill="none" stroke="#ccc"/>
<text x="1187" y="711" class="m" style="fill:#ddd;font-size:10px">ENG</text>
<text x="1218.500" y="711" class="m" style="fill:#ddd;font-size:10px">09:41</text>
<path d="M1246 701H1259V711H1253L1250 714V711H1246Z" fill="#eee"/><path d="M1248 704H1257M1248 707H1257" stroke="#888"/>
</svg>
</body></html>
